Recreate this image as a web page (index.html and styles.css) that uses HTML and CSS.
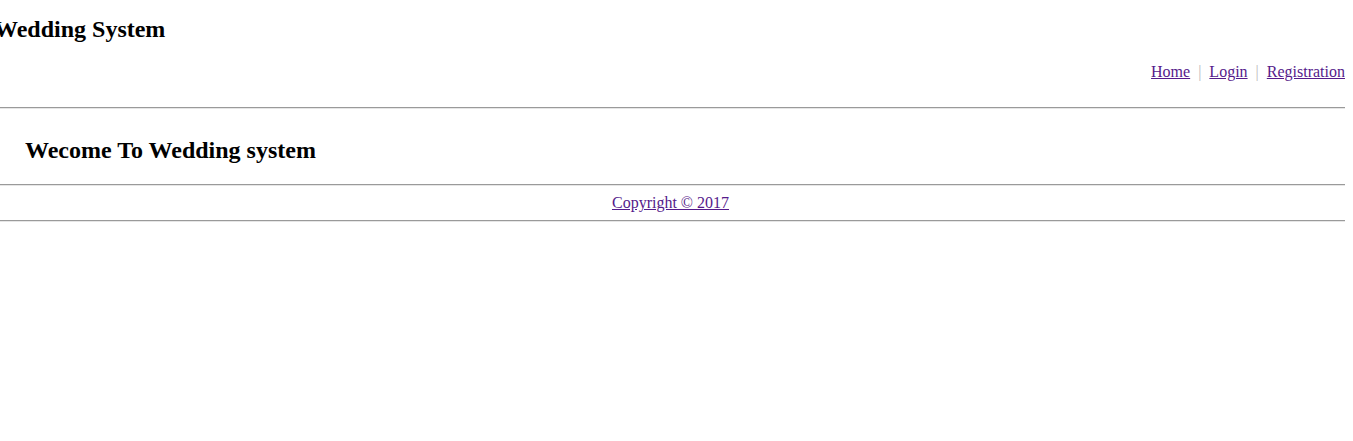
FILE: index.html
```html
<!DOCTYPE html>
<html>
<head>
<meta charset="utf-8">
<title>Wedding System</title>
<link rel="stylesheet" href="styles.css">
</head>
<body>
<div class="page">
  <header class="header">
    <h2 class="site-title">Wedding System</h2>
    <nav class="nav">
      <a href="#">Home</a><span class="sep">&nbsp;&nbsp;|&nbsp;&nbsp;</span><a href="#">Login</a><span class="sep">&nbsp;&nbsp;|&nbsp;&nbsp;</span><a href="#">Registration</a>
    </nav>
  </header>
  <hr class="rule rule-top">
  <main class="content">
    <h2 class="welcome">Wecome To Wedding system</h2>
  </main>
  <hr class="rule rule-mid">
  <footer class="footer">
    <a href="#">Copyright &copy; 2017</a>
  </footer>
  <hr class="rule rule-bottom">
</div>
</body>
</html>
```

FILE: styles.css
```css
html, body {
  margin: 0;
  padding: 0;
  background: #ffffff;
}

body {
  font-family: "Liberation Serif", "Times New Roman", serif;
  color: #000000;
}

.page {
  width: calc(100% - 8px);
  padding-top: 15px;
}

a {
  color: #551a8b;
  text-decoration: underline;
}

.site-title {
  margin: 0 0 0 -6px;
  font-size: 24px;
  line-height: 28px;
  font-weight: bold;
}

.nav {
  margin-top: 20px;
  text-align: right;
  font-size: 16px;
  line-height: 18px;
}

.sep {
  color: #bbbbbb;
}

.rule {
  display: block;
  height: 0;
  margin: 0;
  border: 0;
  border-top: 1px solid #9a9a9a;
  border-bottom: 1px solid #e6e6e6;
}

.rule-top {
  margin-top: 26px;
}

.content {
  padding: 27px 0 0 25px;
}

.welcome {
  margin: 0;
  font-size: 24px;
  line-height: 28px;
  font-weight: bold;
}

.rule-mid {
  margin-top: 20px;
}

.footer {
  padding: 8px 4px 0 0;
  text-align: center;
  font-size: 16px;
  line-height: 18px;
}

.rule-bottom {
  margin-top: 8px;
}
```
